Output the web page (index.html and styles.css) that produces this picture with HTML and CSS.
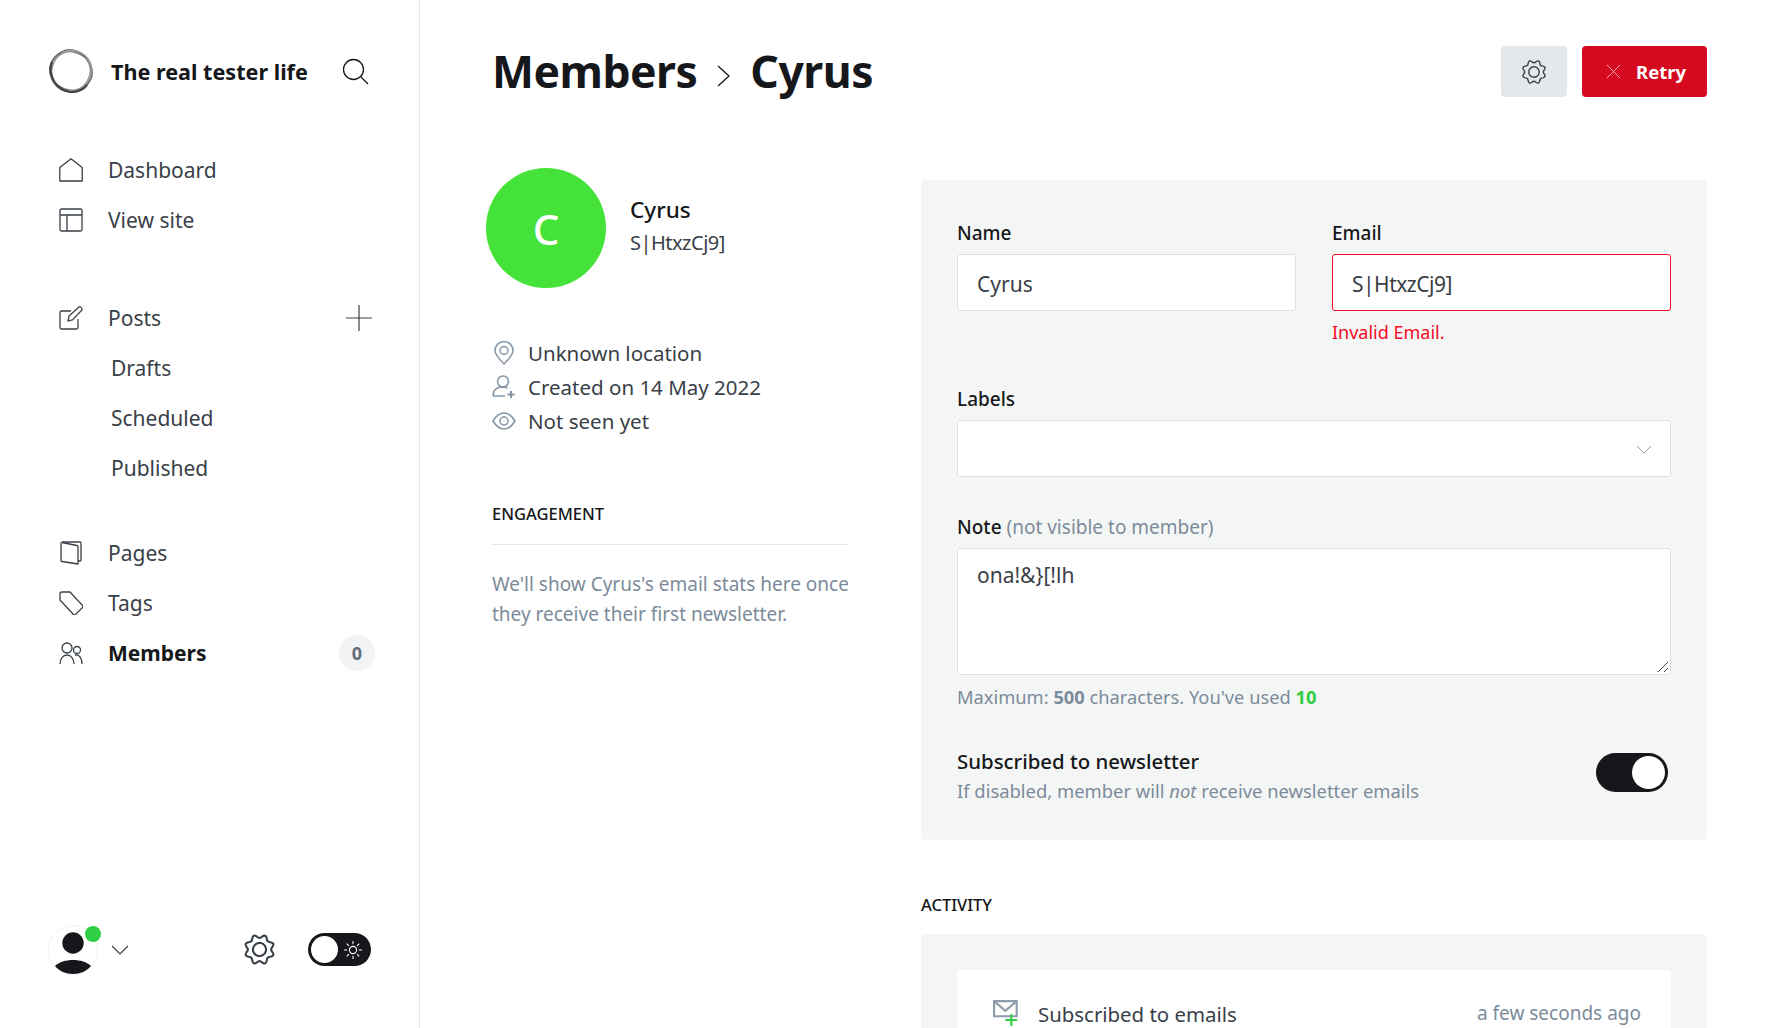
FILE: index.html
```html
<!DOCTYPE html>
<html lang="en">
<head>
  <meta charset="UTF-8" />
  <title>Members - Cyrus</title>
  <link rel="stylesheet" href="styles.css">
</head>
<body>
  <aside class="sidebar">
    <div class="brand">
      <svg class="brand-logo" viewBox="0 0 46 46" fill="none" stroke="#666" stroke-width="1.300"><ellipse cx="23" cy="23" rx="21.500" ry="19" transform="rotate(20 23 23)"/><ellipse cx="23" cy="23" rx="21.500" ry="19.500" transform="rotate(65 23 23)"/><ellipse cx="23" cy="23" rx="21" ry="19" stroke="#999" transform="rotate(110 23 23)"/><ellipse cx="23" cy="23" rx="21" ry="19.500" stroke="#999" transform="rotate(155 23 23)"/><path d="M4 14C-1 27 8 43 23 44c7 0 12-2 16-7" stroke="#444" stroke-width="2.200"/></svg>
      <span class="brand-name">The real tester life</span>
      <svg class="search-icon" viewBox="0 0 28 28" fill="none" stroke="#15171a" stroke-width="1.300"><circle cx="12.500" cy="12.500" r="10"/><path d="M20 20l7 7"/></svg>
    </div>

    <nav class="nav-group">
      <a class="nav-item"><svg class="nav-icon" viewBox="0 0 24 24"><path d="M.8 23V9.500L12 .8l11.200 8.700V23z" stroke-linejoin="round"/></svg>Dashboard</a>
      <a class="nav-item"><svg class="nav-icon" viewBox="0 0 24 24"><rect x="1" y="1" width="22" height="22" rx="1.500"/><path d="M1 7h22M8 7v16"/></svg>View site</a>
    </nav>

    <nav class="nav-group nav-posts">
      <a class="nav-item"><svg class="nav-icon" viewBox="0 0 24 24"><path d="M12 5H2.500A1.500 1.500 0 0 0 1 6.500V21.500A1.500 1.500 0 0 0 2.500 23H17.500A1.500 1.500 0 0 0 19 21.500V13"/><path d="M9 15l1-5L20 1c1-1 3.500 1 3 3L13.500 14z"/></svg>Posts
        <svg class="plus-icon" viewBox="0 0 28 28" stroke="#394047" stroke-width="1.200"><path d="M14 1v26M1 14h26"/></svg>
      </a>
      <a class="nav-sub">Drafts</a>
      <a class="nav-sub">Scheduled</a>
      <a class="nav-sub">Published</a>
    </nav>

    <nav class="nav-group">
      <a class="nav-item"><svg class="nav-icon" viewBox="0 0 24 24"><path d="M3 1h18a1 1 0 0 1 1 1v17a1 1 0 0 1-1 1h-2"/><path d="M3 1.500l15 3a1 1 0 0 1 1 1V23L3 20.500a1 1 0 0 1-1-1V2z" stroke-linejoin="round"/></svg>Pages</a>
      <a class="nav-item"><svg class="nav-icon" viewBox="0 0 24 24"><path d="M1 3a2 2 0 0 1 2-2h8l12.500 13.500a1.500 1.500 0 0 1 0 2l-7 7a1.500 1.500 0 0 1-2 0L1 9z" stroke-linejoin="round"/></svg>Tags</a>
      <a class="nav-item is-active"><svg class="nav-icon" viewBox="0 0 24 24"><circle cx="8" cy="7" r="5"/><circle cx="18" cy="9" r="3.500"/><path d="M1 23c0-5 3-9 7-9s7 4 7 9M16 14c4-1 7 3 7 9"/></svg>Members<span class="count">0</span></a>
    </nav>

    <div class="sidebar-foot">
      <div class="user">
        <svg class="user-pic" viewBox="0 0 50 50"><circle cx="25" cy="25" r="24.500" fill="#fff" stroke="#e8e8e8" stroke-width=".6"/><circle cx="25" cy="18" r="10.700" fill="#15171a"/><path d="M7 41c4-4 11-6 18-6s14 2 18 6c-4 5-11 8-18 8s-14-3-18-8z" fill="#15171a"/></svg>
        <span class="user-dot"></span>
        <svg class="chevron" viewBox="0 0 18 10" fill="none" stroke="#394047" stroke-width="1.200"><path d="M1 1l8 8 8-8"/></svg>
      </div>
      <svg class="foot-gear" viewBox="0 0 32 32"><use href="#gear"/></svg>
      <div class="night-toggle">
        <span class="night-knob"></span>
        <svg class="sun" viewBox="0 0 20 20" fill="none" stroke="#fff" stroke-width="1.200"><circle cx="10" cy="10" r="4"/><path d="M10 0v3.500M10 16.500V20M0 10h3.500M16.500 10H20M3 3l2.500 2.500M14.500 14.500L17 17M3 17l2.500-2.500M14.500 5.500L17 3"/></svg>
      </div>
    </div>
  </aside>

  <main class="main">
    <header class="page-head">
      <h1>Members <svg class="crumb" viewBox="0 0 13 22" fill="none" stroke="#15171a" stroke-width="1.300"><path d="M1 1l11 10L1 21"/></svg> Cyrus</h1>
      <div class="actions">
        <button class="btn-gear"><svg viewBox="0 0 32 32"><use href="#gear"/></svg></button>
        <button class="btn-retry"><svg viewBox="0 0 16 16" fill="none" stroke="#ffb3bd" stroke-width="1"><path d="M1 1l14 14M15 1L1 15"/></svg>Retry</button>
      </div>
    </header>

    <div class="columns">
      <section class="info">
        <div class="profile">
          <div class="avatar">C</div>
          <div>
            <div class="profile-name">Cyrus</div>
            <div class="profile-mail">S|HtxzCj9]</div>
          </div>
        </div>
        <ul class="facts">
          <li><svg viewBox="0 0 24 24"><path d="M12 23C7 18 3 13.500 3 9.500a9 9 0 0 1 18 0C21 13.500 17 18 12 23z"/><circle cx="12" cy="9.500" r="4"/></svg>Unknown location</li>
          <li><svg viewBox="0 0 24 24"><circle cx="11" cy="6.500" r="5.500"/><path d="M1 21c0-6 4-9 10-9 2 0 3 .3 4.500 1M1 21h12"/><path d="M19 16v7M15.500 19.500h7" stroke-width="2"/></svg>Created on 14 May 2022</li>
          <li><svg viewBox="0 0 24 24"><path d="M1 12c3-5 7-8 11-8s8 3 11 8c-3 5-7 8-11 8S4 17 1 12z"/><circle cx="12" cy="12" r="4"/></svg>Not seen yet</li>
        </ul>
        <h4 class="section-title engagement">ENGAGEMENT</h4>
        <p class="engagement-note">We'll show Cyrus's email stats here once they receive their first newsletter.</p>
      </section>

      <section class="details">
        <form class="panel">
          <div class="row-two">
            <div class="field">
              <label>Name</label>
              <div class="input">Cyrus</div>
            </div>
            <div class="field">
              <label>Email</label>
              <div class="input has-error">S|HtxzCj9]</div>
              <div class="error-text">Invalid Email.</div>
            </div>
          </div>
          <div class="field labels-field">
            <label>Labels</label>
            <div class="input select"><svg viewBox="0 0 18 10" fill="none" stroke="#7c8b9a" stroke-width="1"><path d="M1 1l8 8 8-8"/></svg></div>
          </div>
          <div class="field note-field">
            <label>Note <span class="muted">(not visible to member)</span></label>
            <div class="input textarea">ona!&amp;}[!lh
              <svg class="grip" viewBox="0 0 12 12" stroke="#444" fill="none"><path d="M1 11L11 1M7 11l4-4"/></svg>
            </div>
            <div class="counter">Maximum: <b>500</b> characters. You've used <b class="used">10</b></div>
          </div>
          <div class="subscribe">
            <div>
              <div class="subscribe-title">Subscribed to newsletter</div>
              <div class="subscribe-hint">If disabled, member will <em>not</em> receive newsletter emails</div>
            </div>
            <span class="switch"><span class="switch-knob"></span></span>
          </div>
        </form>

        <h4 class="section-title activity">ACTIVITY</h4>
        <div class="panel activity-panel">
          <div class="activity-card">
            <svg class="mail-icon" viewBox="0 0 26 26" fill="none" stroke="#8e9cac" stroke-width="2"><path d="M1 2h21v14H14H1zM1 2l10.500 9L22 2"/><path d="M17 14v11M11.500 19.500h11" stroke="#30cf43"/></svg>
            <span class="activity-text">Subscribed to emails</span>
            <span class="activity-time">a few seconds ago</span>
          </div>
        </div>
      </section>
    </div>
  </main>

  <svg class="defs" width="0" height="0"><defs>
    <g id="gear" fill="none" stroke="#394047" transform="rotate(11.250 16 16)"><circle cx="16" cy="16" r="6"/><path d="M28 16Q31.200 19.020 27.090 20.590Q23.900 21.280 24.490 24.490Q24.610 28.890 20.590 27.090Q17.850 25.320 16 28Q12.980 31.200 11.410 27.090Q10.720 23.900 7.510 24.490Q3.110 24.610 4.910 20.590Q6.680 17.850 4 16Q.8 12.980 4.910 11.410Q8.100 10.720 7.510 7.510Q7.390 3.110 11.410 4.910Q14.150 6.680 16 4Q19.020 .8 20.590 4.910Q21.280 8.100 24.490 7.510Q28.890 7.390 27.090 11.410Q25.320 14.150 28 16z"/></g>
  </defs></svg>
</body>
</html>
```

FILE: styles.css
```css
* {
  box-sizing: border-box;
}

html, body {
  height: 100%;
}

body {
  margin: 0;
  overflow: hidden;
  display: flex;
  font-family: "Noto Sans", sans-serif;
  font-size: 21px;
  color: #394047;
  background: #fff;
}

.defs {
  position: absolute;
}

/* sidebar */
.sidebar {
  width: 420px;
  flex: none;
  border-right: 1px solid #e6e6e6;
  padding: 47px 46px 0 48px;
  display: flex;
  flex-direction: column;
}

.brand {
  display: flex;
  align-items: center;
  height: 48px;
  margin-bottom: 50px;
}

.brand-logo {
  width: 46px;
  height: 46px;
  flex: none;
}

.brand-name {
  margin-left: 17px;
  font-size: 21.600px;
  font-weight: 700;
  color: #15171a;
  white-space: nowrap;
}

.search-icon {
  width: 28px;
  height: 28px;
  margin-left: auto;
  margin-right: 4px;
}

.nav-group {
  display: flex;
  flex-direction: column;
  margin-bottom: 48px;
}

.nav-posts {
  margin-bottom: 35px;
}

.nav-item, .nav-sub {
  height: 50px;
  display: flex;
  align-items: center;
}

.nav-item {
  padding-left: 11px;
}

.nav-sub {
  padding-left: 63px;
}

.nav-icon {
  width: 24px;
  height: 24px;
  margin-right: 25px;
  fill: none;
  stroke: #394047;
  stroke-width: 1.300;
}

.plus-icon {
  width: 28px;
  height: 28px;
  margin-left: auto;
}

.is-active {
  font-weight: 700;
  color: #15171a;
}

.count {
  margin-left: auto;
  margin-right: -2px;
  width: 36px;
  height: 36px;
  border-radius: 50%;
  background: #f1f3f4;
  color: #626d79;
  font-size: 18px;
  display: flex;
  align-items: center;
  justify-content: center;
}

.sidebar-foot {
  margin-top: auto;
  height: 146px;
  padding-top: 43px;
  display: flex;
  align-items: flex-start;
}

.user {
  position: relative;
  display: flex;
  align-items: center;
  height: 50px;
}

.user-pic {
  width: 50px;
  height: 50px;
}

.user-dot {
  position: absolute;
  left: 37px;
  top: 1px;
  width: 16px;
  height: 16px;
  border-radius: 50%;
  background: #30cf43;
}

.chevron {
  width: 18px;
  height: 10px;
  margin-left: 13px;
}

.foot-gear {
  width: 35px;
  height: 35px;
  margin: 7px 0 0 113px;
  stroke-width: 1.900;
}

.night-toggle {
  position: relative;
  width: 63px;
  height: 33px;
  margin: 8px 0 0 31px;
  border-radius: 17px;
  background: #15171a;
  display: flex;
  align-items: center;
  justify-content: flex-end;
  padding-right: 9px;
}

.night-knob {
  position: absolute;
  left: 3px;
  top: 3px;
  width: 27px;
  height: 27px;
  border-radius: 50%;
  background: #fff;
}

.sun {
  width: 18px;
  height: 18px;
}

/* main */
.main {
  flex: 1;
  padding: 0 72px;
  min-width: 0;
  overflow: hidden;
}

.page-head {
  display: flex;
  justify-content: space-between;
  align-items: center;
  height: 143px;
}

h1 {
  margin: -2px 0 0;
  font-size: 44.500px;
  font-weight: 700;
  color: #15171a;
  letter-spacing: -.5px;
  display: flex;
  align-items: center;
  gap: 20px;
  white-space: nowrap;
}

.crumb {
  width: 13px;
  height: 22px;
  margin-top: 10px;
}

.actions {
  display: flex;
  gap: 15px;
}

.btn-gear, .btn-retry {
  height: 51px;
  border: 0;
  border-radius: 4px;
  display: flex;
  align-items: center;
  font-family: inherit;
}

.btn-gear {
  width: 66px;
  justify-content: center;
  background: #e5e8eb;
}

.btn-gear svg {
  width: 28px;
  height: 28px;
  stroke-width: 1.600;
}

.btn-retry {
  width: 125px;
  padding-left: 24px;
  background: #d5091f;
  color: #fff;
  font-size: 18.500px;
  font-weight: 700;
  gap: 15px;
}

.btn-retry svg {
  width: 15px;
  height: 15px;
}

.columns {
  display: flex;
  margin-top: 25px;
}

.info {
  width: 357px;
  flex: none;
  margin-right: 72px;
}

.profile {
  display: flex;
  align-items: center;
  margin-left: -6px;
  gap: 24px;
  height: 120px;
}

.avatar {
  width: 120px;
  height: 120px;
  border-radius: 50%;
  background: #45e239;
  color: #fff;
  font-size: 42px;
  font-weight: 500;
  display: flex;
  align-items: center;
  justify-content: center;
}

.profile-name {
  font-size: 22.500px;
  font-weight: 500;
  color: #15171a;
  margin-top: -5px;
}

.profile-mail {
  font-size: 20px;
  line-height: 28px;
  letter-spacing: -.5px;
  margin-top: 4px;
}

.facts {
  list-style: none;
  margin: 48px 0 0;
  padding: 0;
}

.facts li {
  display: flex;
  align-items: center;
  height: 34px;
  font-size: 20.500px;
}

.facts svg {
  width: 24px;
  height: 24px;
  margin-right: 12px;
  fill: none;
  stroke: #8395a6;
  stroke-width: 1.500;
}

.section-title {
  margin: 0;
  font-size: 16.500px;
  font-weight: 500;
  color: #15171a;
}

.engagement {
  margin-top: 64px;
  padding-bottom: 19px;
  border-bottom: 1px solid #e6e9eb;
}

.engagement-note {
  margin: 24px 0 0;
  font-size: 19px;
  line-height: 30px;
  color: #7c8b9a;
}

.details {
  flex: 1;
  min-width: 0;
}

.panel {
  background: #f4f6f6;
  border-radius: 4px;
  padding: 39px 36px 37px;
  margin-top: 12px;
}

.row-two {
  display: grid;
  grid-template-columns: 1fr 1fr;
  gap: 36px;
}

.field label {
  display: block;
  font-size: 19px;
  font-weight: 500;
  color: #15171a;
  margin-bottom: 7px;
  line-height: 28px;
}

.input {
  position: relative;
  height: 57px;
  padding: 2px 19px 0;
  background: #fff;
  border: 1px solid #dde1e5;
  border-radius: 3px;
  display: flex;
  align-items: center;
  font-size: 21px;
}

.has-error {
  border-color: #f50b23;
  letter-spacing: -.5px;
}

.error-text {
  color: #f50b23;
  font-size: 18px;
  margin-top: 9px;
}

.labels-field {
  margin-top: 41px;
}

.select svg {
  position: absolute;
  right: 18px;
  top: 24px;
  width: 16px;
  height: 9px;
}

.note-field {
  margin-top: 36px;
}

.muted {
  color: #7c8b9a;
  font-weight: 400;
}

.textarea {
  height: 127px;
  align-items: flex-start;
  padding-top: 12px;
}

.grip {
  position: absolute;
  right: 1px;
  bottom: 1px;
  width: 12px;
  height: 12px;
}

.counter {
  font-size: 18.300px;
  color: #7c8b9a;
  margin-top: 9px;
}

.used {
  color: #30cf43;
}

.subscribe {
  display: flex;
  justify-content: space-between;
  align-items: center;
  margin-top: 38px;
}

.subscribe-title {
  font-size: 20.400px;
  font-weight: 500;
  color: #15171a;
}

.subscribe-hint {
  font-size: 18.400px;
  color: #7c8b9a;
  margin-top: 3px;
}

.switch {
  position: relative;
  width: 72px;
  height: 39px;
  margin: 0 3px 6px 0;
  border-radius: 20px;
  background: #15171a;
}

.switch-knob {
  position: absolute;
  right: 3px;
  top: 3px;
  width: 33px;
  height: 33px;
  border-radius: 50%;
  background: #fff;
}

.activity {
  margin-top: 53px;
}

.activity-panel {
  margin-top: 18px;
  height: 200px;
  padding: 36px;
}

.activity-card {
  background: #fff;
  border-radius: 4px;
  height: 160px;
  padding: 29px 30px 0 36px;
  display: flex;
  align-items: flex-start;
}

.mail-icon {
  width: 28px;
  height: 28px;
  margin-right: 17px;
}

.activity-text {
  font-size: 20.400px;
  line-height: 24px;
  margin-top: 3px;
}

.activity-time {
  margin-left: auto;
  font-size: 19px;
  line-height: 24px;
  margin-top: 2px;
  color: #7c8b9a;
}
```
